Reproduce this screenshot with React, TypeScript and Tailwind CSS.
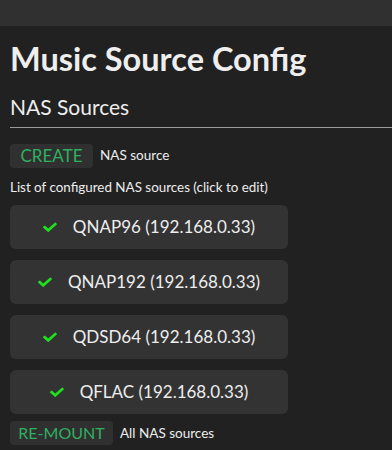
const sources = [
  { name: 'QNAP96', ip: '192.168.0.33' },
  { name: 'QNAP192', ip: '192.168.0.33' },
  { name: 'QDSD64', ip: '192.168.0.33' },
  { name: 'QFLAC', ip: '192.168.0.33' },
];

function Check() {
  return (
    <svg width="14" height="10" viewBox="0 0 512 410" preserveAspectRatio="none" className="shrink-0">
      <path
        fill="#1ee01e"
        d="M173.9 397.4L7.5 231c-10-10-10-26.2 0-36.2l36.2-36.2c10-10 26.2-10 36.2 0L192 270.7 432.1 30.6c10-10 26.2-10 36.2 0l36.2 36.2c10 10 10 26.2 0 36.2L210.1 397.4c-10 10-26.2 10-36.2 0z"
      />
    </svg>
  );
}

export default function App() {
  return (
    <div className="min-h-[450px] bg-[#212121] text-[#eeeeee] font-['Lato',sans-serif]">
      <div className="h-[26px] bg-[#303030]" />

      <div className="pl-[10px]">
        <h1 className="text-[32.5px] font-bold leading-none pt-[17px] pb-[20px]">Music Source Config</h1>
        <h2 className="text-[21px] leading-none pb-[10px] border-b border-[#9a9a9a]">NAS Sources</h2>

        <div className="flex items-center gap-[7px] mt-[16px]">
          <button className="h-[24px] w-[83px] rounded-[4px] bg-[#303030] text-[#2eb060] text-[17px] leading-none">CREATE</button>
          <span className="text-[13.5px]">NAS source</span>
        </div>

        <p className="text-[13.4px] leading-none mt-[13px]">List of configured NAS sources (click to edit)</p>

        <div className="flex flex-col gap-[11px] mt-[11px] w-[278px]">
          {sources.map(s => (
            <div key={s.name} className="h-[44px] rounded-[6px] bg-[#333333] flex items-center justify-center gap-[16px] text-[17px]">
              <Check />
              <span>{s.name} ({s.ip})</span>
            </div>
          ))}
        </div>

        <div className="flex items-center gap-[7px] mt-[7px]">
          <button className="h-[24px] w-[103px] rounded-[4px] bg-[#303030] text-[#2eb060] text-[16px] leading-none">RE-MOUNT</button>
          <span className="text-[13.5px]">All NAS sources</span>
        </div>
      </div>
    </div>
  );
}
